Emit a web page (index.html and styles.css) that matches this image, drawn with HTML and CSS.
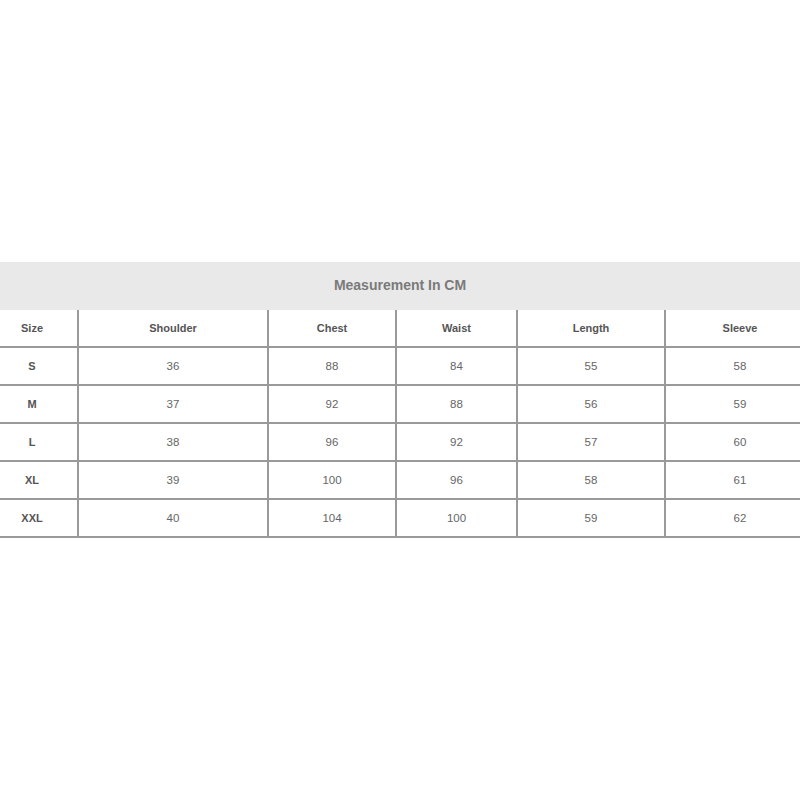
FILE: index.html
```html
<!DOCTYPE html>
<html>
<head>
<meta charset="utf-8">
<link rel="stylesheet" href="styles.css">
</head>
<body>
<div class="page">
  <div class="chart">
    <div class="title">Measurement In CM</div>
    <table class="sizes">
      <colgroup>
        <col class="c-size"><col class="c-shoulder"><col class="c-chest"><col class="c-waist"><col class="c-length"><col class="c-sleeve">
      </colgroup>
      <thead>
        <tr><th>Size</th><th>Shoulder</th><th>Chest</th><th>Waist</th><th>Length</th><th>Sleeve</th></tr>
      </thead>
      <tbody>
        <tr><th>S</th><td>36</td><td>88</td><td>84</td><td>55</td><td>58</td></tr>
        <tr><th>M</th><td>37</td><td>92</td><td>88</td><td>56</td><td>59</td></tr>
        <tr><th>L</th><td>38</td><td>96</td><td>92</td><td>57</td><td>60</td></tr>
        <tr><th>XL</th><td>39</td><td>100</td><td>96</td><td>58</td><td>61</td></tr>
        <tr><th>XXL</th><td>40</td><td>104</td><td>100</td><td>59</td><td>62</td></tr>
      </tbody>
    </table>
  </div>
</div>
</body>
</html>
```

FILE: styles.css
```css
html, body {
  margin: 0;
  padding: 0;
  background: #fff;
}
.page {
  width: 800px;
  height: 800px;
  padding-top: 262px;
  box-sizing: border-box;
  font-family: "Liberation Sans", Arial, sans-serif;
}
.title {
  height: 48px;
  background: #e9e9e9;
  color: #7a7a7a;
  font-weight: bold;
  font-size: 14px;
  display: flex;
  align-items: center;
  justify-content: center;
  padding-bottom: 2px;
  box-sizing: border-box;
}
.sizes {
  width: 800px;
  border-collapse: collapse;
  table-layout: fixed;
}
.c-size { width: 78px; }
.c-shoulder { width: 190px; }
.c-chest { width: 128px; }
.c-waist { width: 121px; }
.c-length { width: 148px; }
.c-sleeve { width: 135px; }
.sizes th, .sizes td {
  height: 36px;
  padding: 0;
  text-align: center;
  vertical-align: middle;
  border-bottom: 2px solid #9a9a9a;
  border-left: 2px solid #9a9a9a;
  font-size: 11px;
}
.sizes tr > :first-child {
  border-left: none;
  padding-right: 13px;
}
.sizes tr > :last-child {
  padding-left: 14px;
}
.sizes th {
  font-weight: bold;
  color: #555;
}
.sizes td {
  color: #666;
  font-size: 11.5px;
}
```
